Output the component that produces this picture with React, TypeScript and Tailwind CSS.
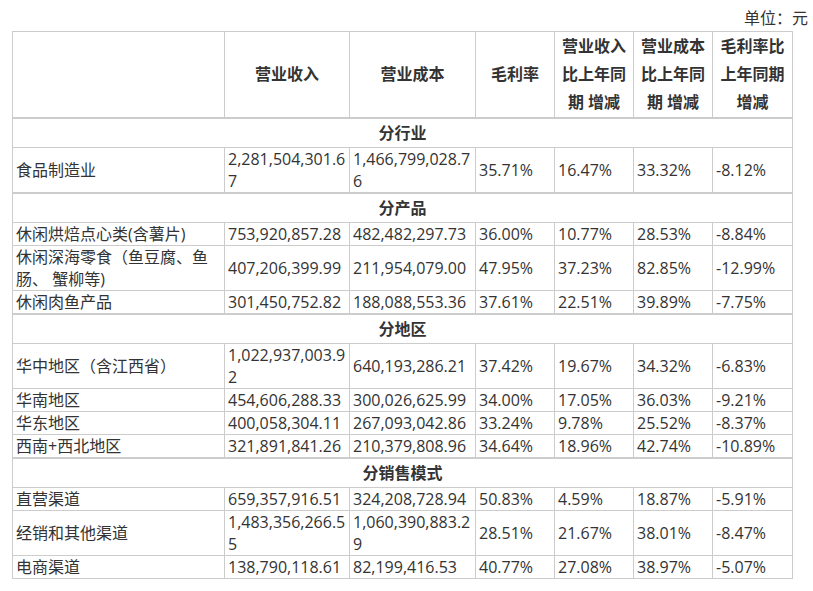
const font = { fontFamily: '"Open Sans", "Noto Sans CJK SC", sans-serif' };

type Row = { section: string } | { cells: string[] };

const rows: Row[] = [
  { section: '分行业' },
  { cells: ['食品制造业', '2,281,504,301.67', '1,466,799,028.76', '35.71%', '16.47%', '33.32%', '-8.12%'] },
  { section: '分产品' },
  { cells: ['休闲烘焙点心类(含薯片)', '753,920,857.28', '482,482,297.73', '36.00%', '10.77%', '28.53%', '-8.84%'] },
  { cells: ['休闲深海零食（鱼豆腐、鱼肠、 蟹柳等)', '407,206,399.99', '211,954,079.00', '47.95%', '37.23%', '82.85%', '-12.99%'] },
  { cells: ['休闲肉鱼产品', '301,450,752.82', '188,088,553.36', '37.61%', '22.51%', '39.89%', '-7.75%'] },
  { section: '分地区' },
  { cells: ['华中地区（含江西省）', '1,022,937,003.92', '640,193,286.21', '37.42%', '19.67%', '34.32%', '-6.83%'] },
  { cells: ['华南地区', '454,606,288.33', '300,026,625.99', '34.00%', '17.05%', '36.03%', '-9.21%'] },
  { cells: ['华东地区', '400,058,304.11', '267,093,042.86', '33.24%', '9.78%', '25.52%', '-8.37%'] },
  { cells: ['西南+西北地区', '321,891,841.26', '210,379,808.96', '34.64%', '18.96%', '42.74%', '-10.89%'] },
  { section: '分销售模式' },
  { cells: ['直营渠道', '659,357,916.51', '324,208,728.94', '50.83%', '4.59%', '18.87%', '-5.91%'] },
  { cells: ['经销和其他渠道', '1,483,356,266.55', '1,060,390,883.29', '28.51%', '21.67%', '38.01%', '-8.47%'] },
  { cells: ['电商渠道', '138,790,118.61', '82,199,416.53', '40.77%', '27.08%', '38.97%', '-5.07%'] },
];

const headers = ['营业收入', '营业成本', '毛利率', '营业收入比上年同期 增减', '营业成本比上年同期 增减', '毛利率比上年同期增减'];
const widths = [212, 125, 126, 79, 79, 79, 80];

const App = () => {
  return (
    <div className="w-[813px] h-[591px] bg-white text-[#333] text-[16px]" style={font}>
      <div className="h-[31px] pt-[7px] pr-[5px] text-right leading-[22px]">单位：元</div>
      <table className="ml-[12px] w-[780px] table-fixed border-collapse">
        <colgroup>
          {widths.map((w, i) => (
            <col key={i} style={{ width: w }} />
          ))}
        </colgroup>
        <thead>
          <tr>
            <th className="border border-[#ccc]" />
            {headers.map((h) => (
              <th key={h} className="border border-[#ccc] px-[3px] text-center align-middle font-bold leading-[28px] h-[86px]">
                {h}
              </th>
            ))}
          </tr>
        </thead>
        <tbody>
          {rows.map((r, i) =>
            'section' in r ? (
              <tr key={i}>
                <td colSpan={7} className="border border-[#ccc] border-t-2 text-center font-bold leading-[28px]">
                  {r.section}
                </td>
              </tr>
            ) : (
              <tr key={i}>
                {r.cells.map((c, j) => (
                  <td key={j} className="border border-[#ccc] px-[3px] align-middle leading-[22px] break-all">
                    {c}
                  </td>
                ))}
              </tr>
            )
          )}
        </tbody>
      </table>
    </div>
  );
};

export default App;
